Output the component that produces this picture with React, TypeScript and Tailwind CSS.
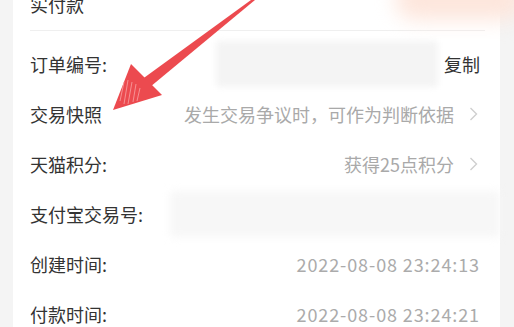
import React from "react";

const Chevron = () => (
  <svg width="9" height="14" viewBox="0 0 9 14" className="ml-[15px] mr-[4px] shrink-0">
    <polyline points="1.5,1 7.5,7 1.5,13" fill="none" stroke="#cfcfcf" strokeWidth="1.4" />
  </svg>
);

const Row = ({ label, children }: { label: string; children?: React.ReactNode }) => (
  <div className="flex h-[50px] items-center justify-between">
    <span className="text-[18px] text-[#333333] whitespace-nowrap">{label}</span>
    <div className="flex items-center">{children}</div>
  </div>
);

export default function App() {
  return (
    <div
      className="relative h-[327px] w-[514px] overflow-hidden bg-[#f4f4f4]"
      style={{ fontFamily: '"Noto Sans CJK SC", "Noto Sans", sans-serif' }}
    >
      <div className="ml-[13px] mr-[14px] h-full bg-white pl-[17px] pr-[18px]">
        <div className="relative flex h-[31px] items-end border-b border-[#efefef] pb-[14px] mr-[-3px]">
          <span className="text-[18px] leading-[24px] text-[#333333]">实付款</span>
          <div className="absolute right-[-40px] top-[-22px] h-[42px] w-[130px] rounded-full bg-[#fde6dc] blur-[10px]" />
        </div>
        <div className="pt-[8px]">
          <Row label="订单编号:">
            <div className="mr-[6px] h-[46px] w-[222px] rounded bg-[#f4f4f4] blur-[3px]" />
            <span className="text-[18px] text-[#333333] pr-[2px]">复制</span>
          </Row>
          <Row label="交易快照">
            <span className="text-[18px] text-[#a9a9a9]">发生交易争议时，可作为判断依据</span>
            <Chevron />
          </Row>
          <Row label="天猫积分:">
            <span className="text-[18px] text-[#a9a9a9]">获得25点积分</span>
            <Chevron />
          </Row>
          <Row label="支付宝交易号:">
            <div className="mr-[-18px] h-[46px] w-[330px] rounded bg-[#f7f7f7] blur-[4px]" />
          </Row>
          <Row label="创建时间:">
            <span className="text-[18px] tracking-[0.9px] text-[#ababab] pr-[2px]">2022-08-08 23:24:13</span>
          </Row>
          <Row label="付款时间:">
            <span className="text-[18px] tracking-[0.9px] text-[#ababab] pr-[2px]">2022-08-08 23:24:21</span>
          </Row>
        </div>
      </div>
      <svg className="absolute left-0 top-0" width="514" height="327" viewBox="0 0 514 327">
        <polygon points="251,0 255,0 150,87 141,80" fill="#ec4a4f" />
        <polygon points="113,110 131,64 162,95" fill="#ec4a4f" />
        <g stroke="#f7a3a5" strokeWidth="0.8">
          <line x1="124" y1="82" x2="120" y2="101" />
          <line x1="128" y1="80" x2="124" y2="104" />
          <line x1="132" y1="82" x2="128" y2="104" />
          <line x1="136" y1="84" x2="133" y2="102" />
          <line x1="140" y1="88" x2="137" y2="101" />
        </g>
      </svg>
    </div>
  );
}
